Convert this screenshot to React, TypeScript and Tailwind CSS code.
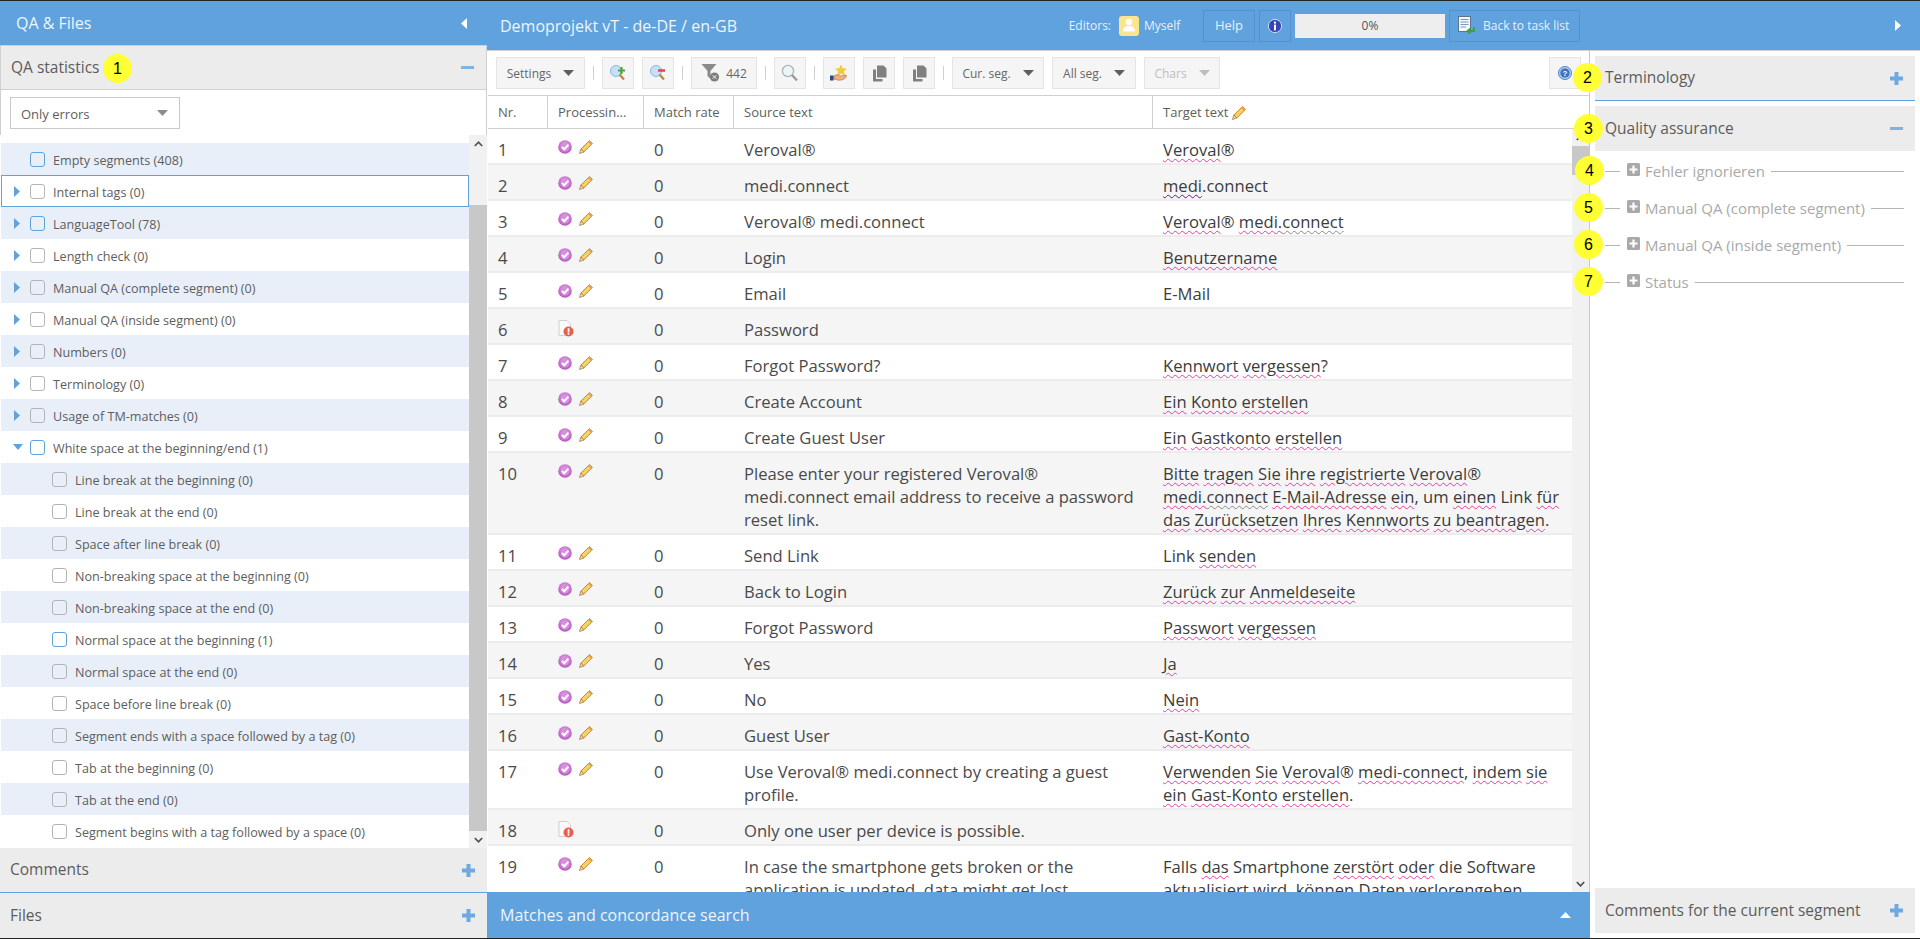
import * as React from "react";

// Small inline icons, drawn to match the toolbar sprites
function StatusIcon() {
  return (
    <svg width="14" height="14" viewBox="0 0 14 14" className="shrink-0">
      <defs>
        <radialGradient id="st" cx="50%" cy="40%" r="60%">
          <stop offset="0%" stopColor="#e9b4ec" />
          <stop offset="100%" stopColor="#b555c0" />
        </radialGradient>
      </defs>
      <circle cx="7" cy="7" r="6.8" fill="url(#st)" />
      <circle cx="7" cy="7" r="4.2" fill="#d98fdf" />
      <path d="M4 7 L6.2 9.3 L10.4 4.6" fill="none" stroke="#fff" strokeWidth="2" />
    </svg>
  );
}

function PencilIcon() {
  return (
    <svg width="14" height="14" viewBox="0 0 14 14" className="shrink-0">
      <path d="M10.4 .6 L13.4 3.4 L4.8 12 L1.8 9.2 Z" fill="#f8d06a" stroke="#c98a28" strokeWidth="1" />
      <path d="M1.8 9.2 L4.8 12 L.5 13.5 Z" fill="#f3dfb8" stroke="#a9793a" strokeWidth=".8" />
      <path d="M10.4 .6 L13.4 3.4 L12 4.8 L9 2 Z" fill="#e9a04a" />
    </svg>
  );
}

function ErrorDocIcon() {
  return (
    <svg width="16" height="17" viewBox="0 0 16 17" className="shrink-0">
      <path d="M1 .5 H9 L12.5 4 V15.5 H1 Z" fill="#fafafa" stroke="#cfcfcf" />
      <circle cx="10.5" cy="11.5" r="5" fill="#e5604f" />
      <rect x="9.7" y="8.2" width="1.7" height="4.4" fill="#fff" />
      <rect x="9.7" y="13.1" width="1.7" height="1.6" fill="#fff" />
    </svg>
  );
}

function ZoomIcon({ sign }: { sign: "plus" | "minus" }) {
  return (
    <svg width="18" height="18" viewBox="0 0 18 18">
      <circle cx="7" cy="7" r="5.5" fill="#c8e0f6" stroke="#8ab8e6" />
      <path d="M10.5 10.5 L15 15.5" stroke="#b98a45" strokeWidth="2.4" />
      {sign === "plus" ? (
        <path d="M9 6.5 H16 M12.5 3 V10" stroke="#4aa53f" strokeWidth="2.2" />
      ) : (
        <path d="M9 6.5 H16" stroke="#e2485a" strokeWidth="2.6" />
      )}
    </svg>
  );
}

function FilterIcon() {
  return (
    <svg width="20" height="20" viewBox="0 0 20 20">
      <path d="M.5 1 H15.5 L9.5 8 V16 L6.5 13 V8 Z" fill="#8a8a8a" />
      <circle cx="13.5" cy="14" r="4.6" fill="#7d7d7d" />
      <path d="M11.8 12.3 L15.2 15.7 M15.2 12.3 L11.8 15.7" stroke="#fff" strokeWidth="1" />
    </svg>
  );
}

function SearchIcon() {
  return (
    <svg width="18" height="19" viewBox="0 0 18 19">
      <circle cx="7" cy="7" r="5.6" fill="#eef3f6" stroke="#a8b4ba" strokeWidth="1.3" />
      <path d="M11 11 L16 16.5" stroke="#9a9a9a" strokeWidth="2.4" />
    </svg>
  );
}

function StarHandIcon() {
  return (
    <svg width="18" height="19" viewBox="0 0 18 19">
      <path d="M11 .5 L12.8 4.3 L17 4.8 L13.9 7.6 L14.8 11.6 L11 9.6 L7.2 11.6 L8.1 7.6 L5 4.8 L9.2 4.3 Z" fill="#f5c93a" />
      <path d="M4 12 C7 10 9 11 11 12 L16 11 C17 12 16 14 14 15 C10 17 7 16 4 15 Z" fill="#eeb183" stroke="#b9743f" strokeWidth=".7" />
      <rect x="0" y="11.5" width="3.6" height="5" fill="#2f4a86" />
    </svg>
  );
}

function CopyIcon() {
  return (
    <svg width="15" height="17" viewBox="0 0 15 17">
      <path d="M5 .5 H11.5 L14.5 3.5 V12.5 H5 Z" fill="#808080" />
      <path d="M1 4.5 H4 V14 H10.5 V16.5 H1 Z" fill="#808080" />
    </svg>
  );
}

function HelpIcon() {
  return (
    <svg width="14" height="14" viewBox="0 0 14 14">
      <circle cx="7" cy="7" r="6.6" fill="#a9c4ea" stroke="#5f8fd0" />
      <circle cx="7" cy="7" r="4.6" fill="#3f6fc0" />
      <text x="7" y="9.8" textAnchor="middle" fontSize="8" fontWeight="700" fill="#fff" fontFamily="Liberation Sans, sans-serif">?</text>
    </svg>
  );
}

function InfoIcon() {
  return (
    <svg width="14" height="14" viewBox="0 0 14 14">
      <circle cx="7" cy="7" r="6.6" fill="#3547b8" stroke="#dfe6fa" strokeWidth=".9" />
      <rect x="6" y="2.6" width="2" height="2" fill="#fff" />
      <rect x="6" y="5.6" width="2" height="5.8" fill="#fff" />
    </svg>
  );
}

function BackIcon() {
  return (
    <svg width="17" height="19" viewBox="0 0 17 19">
      <rect x=".5" y=".5" width="12" height="15" fill="#f4f7fb" stroke="#5d7590" />
      <path d="M2.5 3.5 H10.5 M2.5 6 H10.5 M2.5 8.5 H10.5 M2.5 11 H8" stroke="#7f9ab8" />
      <path d="M16 11 V15 H10 M12.5 12.5 L9.5 15 L12.5 17.5" fill="none" stroke="#3ea23a" strokeWidth="1.8" />
    </svg>
  );
}

function AvatarIcon() {
  return (
    <div className="flex h-5 w-5 items-center justify-center rounded-[3px] bg-[#fde58c]">
      <svg width="14" height="15" viewBox="0 0 14 15">
        <circle cx="7" cy="4" r="3.2" fill="#fff" />
        <path d="M1 13.5 C1 9.5 3.5 8 7 8 C10.5 8 13 9.5 13 13.5 Z" fill="#fff" />
      </svg>
    </div>
  );
}

function Caret({ className = "fill-[#5f5f5f]" }: { className?: string }) {
  return (
    <svg width="11" height="6" viewBox="0 0 11 6" className={className}>
      <path d="M0 0 H11 L5.5 6 Z" />
    </svg>
  );
}

function PlusIcon() {
  return (
    <svg width="13" height="13" viewBox="0 0 13 13" className="shrink-0">
      <path d="M0 6.5 H13 M6.5 0 V13" stroke="#6fa9e0" strokeWidth="4" />
    </svg>
  );
}

function MinusIcon() {
  return (
    <svg width="13" height="13" viewBox="0 0 13 13" className="shrink-0">
      <path d="M0 6.5 H13" stroke="#7fb3e4" strokeWidth="3" />
    </svg>
  );
}

function PanelBar({ title, open, className = "" }: { title: string; open?: boolean; className?: string }) {
  return (
    <div className={"flex h-[45px] shrink-0 items-center justify-between bg-[#ececec] pl-[10px] pr-[12px] text-[15.5px] text-[#5c5c5c] " + className}>
      <span>{title}</span>
      {open ? <MinusIcon /> : <PlusIcon />}
    </div>
  );
}

function Chevron({ up }: { up?: boolean }) {
  return (
    <div className="flex h-[17px] shrink-0 items-center justify-center bg-[#f1f1f1]">
      <svg width="9" height="6" viewBox="0 0 9 6">
        <path d={up ? "M.8 5 L4.5 1.2 L8.2 5" : "M.8 1 L4.5 4.8 L8.2 1"} fill="none" stroke="#505050" strokeWidth="1.7" />
      </svg>
    </div>
  );
}

// QA statistics tree
const qaRows = [
  { label: "Empty segments (408)", blue: true, leaf: true },
  { label: "Internal tags (0)", active: true },
  { label: "LanguageTool (78)", blue: true },
  { label: "Length check (0)" },
  { label: "Manual QA (complete segment) (0)" },
  { label: "Manual QA (inside segment) (0)" },
  { label: "Numbers (0)" },
  { label: "Terminology (0)" },
  { label: "Usage of TM-matches (0)" },
  { label: "White space at the beginning/end (1)", blue: true, expanded: true },
  { label: "Line break at the beginning (0)", child: true },
  { label: "Line break at the end (0)", child: true },
  { label: "Space after line break (0)", child: true },
  { label: "Non-breaking space at the beginning (0)", child: true },
  { label: "Non-breaking space at the end (0)", child: true },
  { label: "Normal space at the beginning (1)", child: true, blue: true },
  { label: "Normal space at the end (0)", child: true },
  { label: "Space before line break (0)", child: true },
  { label: "Segment ends with a space followed by a tag (0)", child: true },
  { label: "Tab at the beginning (0)", child: true },
  { label: "Tab at the end (0)", child: true },
  { label: "Segment begins with a tag followed by a space (0)", child: true },
];

type QaRow = { label: string; blue?: boolean; leaf?: boolean; active?: boolean; expanded?: boolean; child?: boolean };

function QaItem({ row, index }: { row: QaRow; index: number }) {
  const shaded = index % 2 === 0;
  return (
    <div
      className={
        "flex h-8 items-center border text-[12.6px] text-[#5e5e5e] " +
        (row.active ? "border-[#5fa2dd] " : "border-transparent ") +
        (shaded ? "bg-[#e8eff9] " : "bg-white ") +
        (row.child ? "pl-[50px]" : "pl-[11px]")
      }
    >
      {!row.child && (
        <div className="flex w-[17px] shrink-0 items-center">
          {!row.leaf &&
            (row.expanded ? (
              <svg width="10" height="6" viewBox="0 0 10 6">
                <path d="M0 0 H10 L5 6 Z" fill="#5fa2dd" />
              </svg>
            ) : (
              <svg width="7" height="11" viewBox="0 0 7 11" className="ml-[1px]">
                <path d="M0 0 L6 5.5 L0 11 Z" fill="#5fa2dd" />
              </svg>
            ))}
        </div>
      )}
      <div className={"h-[15px] w-[15px] shrink-0 rounded-[3px] border-[1.5px] " + (row.blue ? "border-[#5fa2dd]" : "border-[#b4b4b4]")} />
      <span className="ml-2 whitespace-nowrap pt-1">{row.label}</span>
    </div>
  );
}

function P({ children }: { children: React.ReactNode }) {
  return <span className="underline decoration-[#e93ba6] decoration-wavy decoration-1 underline-offset-2">{children}</span>;
}

function G({ children }: { children: React.ReactNode }) {
  return <span className="underline decoration-[#8a8a8a] decoration-wavy decoration-1 underline-offset-2">{children}</span>;
}

function D({ children }: { children: React.ReactNode }) {
  return <span className="underline decoration-[#6a1b7a] decoration-wavy decoration-1 underline-offset-2">{children}</span>;
}

const segments: { source: string; target?: React.ReactNode; error?: boolean }[] = [
  { source: "Veroval®", target: <><P>Veroval</P>®</> },
  { source: "medi.connect", target: <><D>medi</D>.connect</> },
  { source: "Veroval® medi.connect", target: <><P>Veroval</P>® <P>medi.</P><G>connect</G></> },
  { source: "Login", target: <P>Benutzername</P> },
  { source: "Email", target: "E-Mail" },
  { source: "Password", error: true },
  { source: "Forgot Password?", target: <><P>Kennwort</P> <P>vergessen</P>?</> },
  { source: "Create Account", target: <><P>Ein</P> <P>Konto</P> <P>erstellen</P></> },
  { source: "Create Guest User", target: <><P>Ein</P> <P>Gastkonto</P> <P>erstellen</P></> },
  {
    source: "Please enter your registered Veroval®\nmedi.connect email address to receive a password\nreset link.",
    target: (
      <>
        <P>Bitte</P> <P>tragen</P> <P>Sie</P> <P>ihre</P> <P>registrierte</P> <P>Veroval</P>® <P>medi.</P><G>connect</G> <P>E-Mail-Adresse</P> <P>ein</P>, um <P>einen</P> Link <P>für</P> <P>das</P> <P>Zurücksetzen</P> <P>Ihres</P> <P>Kennworts</P> <P>zu</P> <P>beantragen</P>.
      </>
    ),
  },
  { source: "Send Link", target: <>Link <P>senden</P></> },
  { source: "Back to Login", target: <><P>Zurück</P> <P>zur</P> <P>Anmeldeseite</P></> },
  { source: "Forgot Password", target: <><P>Passwort</P> <P>vergessen</P></> },
  { source: "Yes", target: <P>Ja</P> },
  { source: "No", target: <P>Nein</P> },
  { source: "Guest User", target: <P>Gast-Konto</P> },
  {
    source: "Use Veroval® medi.connect by creating a guest profile.",
    target: <><P>Verwenden</P> <P>Sie</P> <P>Veroval</P>® <P>medi-connect</P>, <P>indem</P> <P>sie</P> <P>ein</P> <P>Gast-Konto</P> <P>erstellen</P>.</>,
  },
  { source: "Only one user per device is possible.", error: true },
  {
    source: "In case the smartphone gets broken or the application is updated, data might get lost.",
    target: <>Falls <P>das</P> Smartphone <P>zerstört</P> <P>oder</P> die Software <P>aktualisiert</P> <P>wird</P>, <P>können</P> <P>Daten</P> <P>verlorengehen</P>.</>,
  },
];

function TBtn({ children, className = "w-8" }: { children: React.ReactNode; className?: string }) {
  return (
    <div className={"flex h-8 shrink-0 items-center justify-center border border-[#e4e4e4] bg-[#f5f5f5] text-[12px] " + className}>
      {children}
    </div>
  );
}

function Label({ children, muted }: { children: React.ReactNode; muted?: boolean }) {
  return <span className={"pt-px " + (muted ? "text-[#bdbdbd]" : "text-[#666]")}>{children}</span>;
}

function Sep() {
  return <div className="h-[14px] w-px shrink-0 bg-[#cfcfcf]" />;
}

function HBtn({ children, className = "" }: { children: React.ReactNode; className?: string }) {
  return <div className={"flex h-8 items-center border border-[#5590cf] text-[13px] text-[#e6f0fa] " + className}>{children}</div>;
}

const qaGroups = ["Fehler ignorieren", "Manual QA (complete segment)", "Manual QA (inside segment)", "Status"];

function Marker({ n, className }: { n: number; className: string }) {
  return (
    <div className={"absolute z-10 flex h-[29px] w-[29px] items-center justify-center rounded-full bg-[#ffff33] font-['Liberation_Sans',sans-serif] text-[16px] text-black " + className}>
      {n}
    </div>
  );
}

export default function App() {
  return (
    <div className="relative flex h-[939px] w-[1920px] flex-col overflow-hidden bg-white font-['Open_Sans',sans-serif]">
      <div className="h-px shrink-0 bg-[#222]" />
      <div className="flex min-h-0 flex-1">
        {/* QA & Files */}
        <div className="flex w-[487px] shrink-0 flex-col">
          <div className="flex h-11 shrink-0 items-center justify-between bg-[#5fa2dd] pl-4 pr-[20px] text-[16px] text-[#eef5fc]">
            <span>QA &amp; Files</span>
            <svg width="6" height="11" viewBox="0 0 6 11">
              <path d="M6 0 L0 5.5 L6 11 Z" fill="#fff" />
            </svg>
          </div>
          <PanelBar title="QA statistics" open className="border border-[#d0d0d0]" />
          <div className="h-[45px] shrink-0 border-x border-[#d0d0d0] pl-[9px] pt-[7px]">
            <div className="flex h-8 w-[170px] items-center justify-between border border-[#c9c9c9] pl-[10px] pr-[11px] text-[13px] text-[#5e5e5e]">
              <span className="pt-1">Only errors</span>
              <Caret className="fill-[#8d8d8d]" />
            </div>
          </div>
          <div className="flex min-h-0 flex-1 pl-px">
            <div className="flex-1 overflow-hidden pt-2">
              {qaRows.map((row, i) => (
                <QaItem key={row.label} row={row} index={i} />
              ))}
            </div>
            <div className="flex w-[18px] shrink-0 flex-col">
              <Chevron up />
              <div className="h-[53px] shrink-0 bg-[#f1f1f1]" />
              <div className="flex-1 bg-[#c8c8c8]" />
              <Chevron />
            </div>
          </div>
          <PanelBar title="Comments" className="border-b border-[#5fa2dd]" />
          <PanelBar title="Files" />
        </div>

        <div className="flex min-w-0 flex-1 flex-col">
          {/* Task header */}
          <div className="flex h-[50px] shrink-0 items-center border-b border-[#d0d0d0] bg-[#5fa2dd]">
            <div className="flex-1 pl-[13px] text-[16px] text-[#eef5fc]">Demoprojekt vT - de-DE / en-GB</div>
            <div className="flex items-center text-[12px] text-[#e6f0fa]">
              <span>Editors:</span>
              <div className="ml-2">
                <AvatarIcon />
              </div>
              <span className="ml-[5px] w-[59px]">Myself</span>
              <HBtn className="w-[52px] justify-center">Help</HBtn>
              <HBtn className="ml-1 w-8 justify-center">
                <InfoIcon />
              </HBtn>
              <div className="ml-1 flex h-6 w-[150px] items-center justify-center bg-[#eeeeee] text-[12px] text-[#555]">0%</div>
              <HBtn className="ml-1 w-[131px] gap-2 pl-2">
                <BackIcon />
                <span className="whitespace-nowrap text-[12px]">Back to task list</span>
              </HBtn>
            </div>
            <div className="flex w-[340px] justify-end pr-[19px]">
              <svg width="6" height="11" viewBox="0 0 6 11">
                <path d="M0 0 L6 5.5 L0 11 Z" fill="#fff" />
              </svg>
            </div>
          </div>

          <div className="flex min-h-0 flex-1">
            {/* Segment grid */}
            <div className="flex w-[1103px] shrink-0 flex-col">
              <div className="flex min-h-0 flex-1 flex-col border-r border-[#c8c8c8] pl-px">
                <div className="flex h-[45px] shrink-0 items-center gap-2 border-b border-[#d0d0d0] pl-2 pr-2">
                  <TBtn className="w-[89px] gap-[12px]">
                    <Label>Settings</Label>
                    <Caret />
                  </TBtn>
                  <Sep />
                  <TBtn className="w-8"><ZoomIcon sign="plus" /></TBtn>
                  <TBtn className="w-8"><ZoomIcon sign="minus" /></TBtn>
                  <Sep />
                  <TBtn className="w-[66px] gap-[5px]">
                    <FilterIcon />
                    <Label>442</Label>
                  </TBtn>
                  <Sep />
                  <TBtn className="w-8"><SearchIcon /></TBtn>
                  <Sep />
                  <TBtn className="w-8"><StarHandIcon /></TBtn>
                  <TBtn className="w-8"><CopyIcon /></TBtn>
                  <TBtn className="w-8"><CopyIcon /></TBtn>
                  <Sep />
                  <TBtn className="w-[92px] gap-3">
                    <Label>Cur. seg.</Label>
                    <Caret />
                  </TBtn>
                  <TBtn className="w-[84px] gap-3">
                    <Label>All seg.</Label>
                    <Caret />
                  </TBtn>
                  <TBtn className="w-[76px] gap-3">
                    <Label muted>Chars</Label>
                    <Caret className="fill-[#bdbdbd]" />
                  </TBtn>
                  <TBtn className="ml-auto w-8"><HelpIcon /></TBtn>
                </div>

                <div className="grid h-[33px] shrink-0 grid-cols-[60px_96px_90px_419px_1fr] items-stretch border-b border-[#d0d0d0] text-[13px] text-[#5e5e5e]">
                  <div className="flex items-center border-r border-[#d0d0d0] pl-[10px] pt-[2px]">Nr.</div>
                  <div className="flex items-center border-r border-[#d0d0d0] pl-[10px] pt-[2px]">Processin...</div>
                  <div className="flex items-center border-r border-[#d0d0d0] pl-[10px] pt-[2px]">Match rate</div>
                  <div className="flex items-center border-r border-[#d0d0d0] pl-[10px] pt-[2px]">Source text</div>
                  <div className="flex items-center gap-1 pl-[10px] pt-[2px]">
                    <span>Target text</span>
                    <PencilIcon />
                  </div>
                </div>

                <div className="flex min-h-0 flex-1">
                  <div className="min-w-0 flex-1 overflow-hidden">
                    {segments.map((seg, i) => (
                      <div
                        key={i}
                        className={
                          "grid grid-cols-[60px_96px_90px_419px_1fr] border-b-2 border-[#ececec] pt-[9px] pb-[2px] text-[16.6px] leading-[23px] text-[#4a4a4a] " +
                          (i % 2 === 1 ? "bg-[#f5f5f5]" : "bg-white")
                        }
                      >
                        <div className="pl-[10px]">{i + 1}</div>
                        <div className="flex items-start gap-[7px] pl-[10px] pt-[2px]">
                          {seg.error ? (
                            <ErrorDocIcon />
                          ) : (
                            <>
                              <StatusIcon />
                              <PencilIcon />
                            </>
                          )}
                        </div>
                        <div className="pl-[10px]">0</div>
                        <div className="whitespace-pre-line px-[10px]">{seg.source}</div>
                        <div className="px-[10px] text-[#3c3c3c]">{seg.target}</div>
                      </div>
                    ))}
                  </div>
                  <div className="flex w-[17px] shrink-0 flex-col bg-[#f1f1f1]">
                    <Chevron up />
                    <div className="h-[29px] shrink-0 bg-[#c8c8c8]" />
                    <div className="flex-1" />
                    <Chevron />
                  </div>
                </div>
              </div>
              <div className="flex h-[46px] shrink-0 items-center justify-between bg-[#5fa2dd] pl-[13px] pr-[19px] text-[16px] text-[#eef5fc]">
                <span>Matches and concordance search</span>
                <svg width="11" height="6" viewBox="0 0 11 6">
                  <path d="M0 6 L5.5 0 L11 6 Z" fill="#fff" />
                </svg>
              </div>
            </div>

            {/* Terminology and QA panel */}
            <div className="flex min-w-0 flex-1 flex-col px-[5px] pt-[5px] pb-[5px]">
              <PanelBar title="Terminology" className="border-b border-[#5fa2dd]" />
              <PanelBar title="Quality assurance" open className="mt-[5px]" />
              <div className="mt-[2px] flex flex-col">
                {qaGroups.map((name) => (
                  <div key={name} className="flex h-[37px] items-center pl-[10px] pr-[11px] text-[15px] text-[#a9a9a9]">
                    <div className="h-px w-[15px] shrink-0 bg-[#b5b5b5]" />
                    <svg width="13" height="13" viewBox="0 0 13 13" className="ml-[7px] mb-1 shrink-0">
                      <rect width="13" height="13" rx="1.5" fill="#a9a9a9" />
                      <path d="M2.5 6.5 H10.5 M6.5 2.5 V10.5" stroke="#fff" strokeWidth="2.2" />
                    </svg>
                    <span className="ml-[5px] whitespace-nowrap">{name}</span>
                    <div className="ml-[6px] h-px flex-1 bg-[#b5b5b5]" />
                  </div>
                ))}
              </div>
              <div className="flex-1" />
              <PanelBar title="Comments for the current segment" />
            </div>
          </div>
        </div>
      </div>
      <div className="h-px shrink-0 bg-[#222]" />

      {/* Numbered annotation markers */}
      <Marker n={1} className="left-[103px] top-[54px]" />
      <Marker n={2} className="left-[1573px] top-[63px]" />
      <Marker n={3} className="left-[1574px] top-[114px]" />
      <Marker n={4} className="left-[1575px] top-[156px]" />
      <Marker n={5} className="left-[1574px] top-[193px]" />
      <Marker n={6} className="left-[1574px] top-[230px]" />
      <Marker n={7} className="left-[1574px] top-[267px]" />
    </div>
  );
}
